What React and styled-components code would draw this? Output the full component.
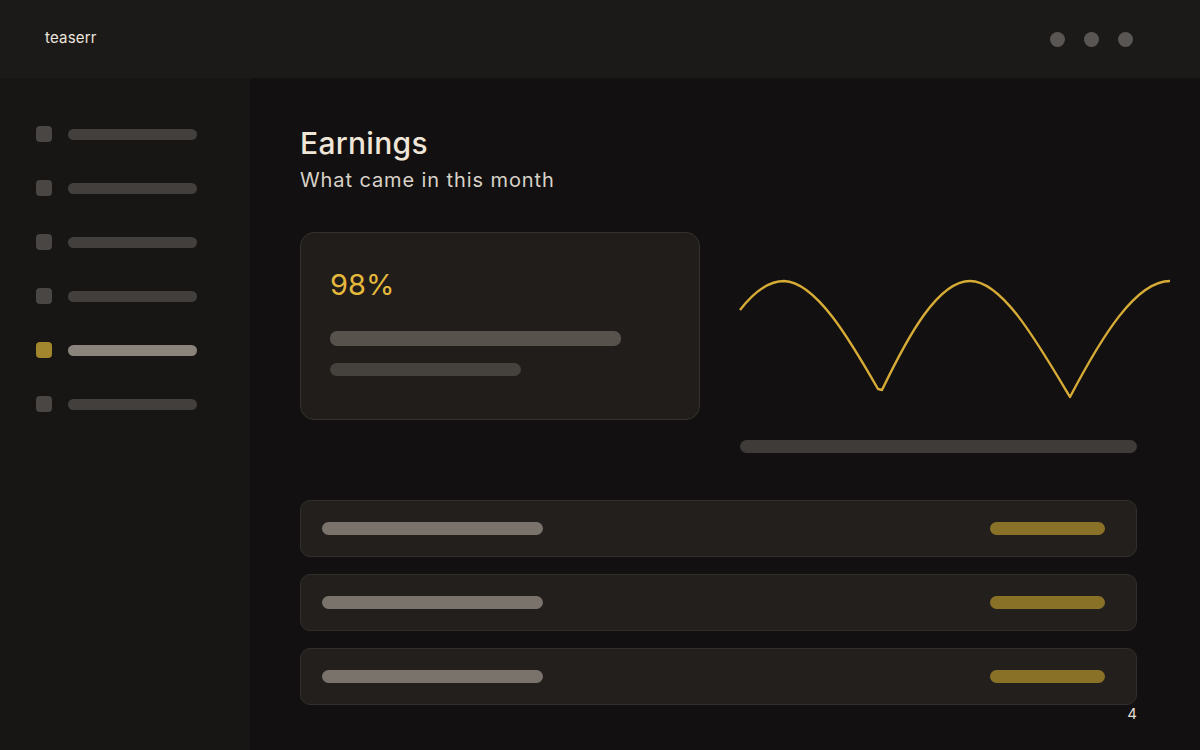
import React from 'react';
import styled, { createGlobalStyle } from 'styled-components';

const GlobalStyle = createGlobalStyle`
  html, body {
    margin: 0;
    padding: 0;
    background: #121010;
  }
  body {
    font-family: Inter, "Noto Sans", sans-serif;
    color: #ebe4d8;
  }
`;

const Page = styled.div`
  width: 1200px;
  height: 750px;
  overflow: hidden;
  display: flex;
  flex-direction: column;
  background: #121010;
`;

const Header = styled.header`
  height: 78px;
  flex-shrink: 0;
  display: flex;
  align-items: center;
  justify-content: space-between;
  padding: 0 67px 0 45px;
  background: #1c1a19;
  box-sizing: border-box;
`;

const Brand = styled.div`
  font-size: 15px;
  line-height: 20px;
  margin-top: -3px;
  color: #ece6dc;
  letter-spacing: 0.2px;
`;

const Dots = styled.div`
  display: flex;
  gap: 19px;
  margin-top: 1px;
`;

const Dot = styled.span`
  width: 15px;
  height: 15px;
  border-radius: 50%;
  background: #5a5654;
`;

const Body = styled.div`
  flex: 1;
  display: grid;
  grid-template-columns: 250px minmax(0, 1fr);
`;

const Sidebar = styled.nav`
  background: #181615;
  padding: 48px 0 0 36px;
  display: flex;
  flex-direction: column;
  gap: 38px;
`;

const NavItem = styled.div`
  display: flex;
  align-items: center;
  gap: 16px;
  height: 16px;
`;

const NavIcon = styled.span`
  width: 16px;
  height: 16px;
  border-radius: 4px;
  background: ${p => (p.$active ? '#a3872f' : '#4a4644')};
`;

const NavBar = styled.span`
  width: 129px;
  height: 11px;
  border-radius: 6px;
  background: ${p => (p.$active ? '#8a847c' : '#433f3c')};
`;

const Main = styled.main`
  padding: 47px 63px 0 50px;
  display: flex;
  flex-direction: column;
  min-width: 0;
`;

const Title = styled.h1`
  margin: 0;
  font-size: 30px;
  line-height: 36px;
  font-weight: 500;
  color: #efe6d8;
  letter-spacing: 0.3px;
`;

const Subtitle = styled.p`
  margin: 5px 0 0;
  font-size: 20px;
  line-height: 28px;
  font-weight: 400;
  color: #d8d2c8;
  letter-spacing: 0.9px;
`;

const TopRow = styled.div`
  margin-top: 38px;
  height: 188px;
  display: flex;
  align-items: flex-start;
  gap: 40px;
`;

const StatCard = styled.section`
  width: 400px;
  height: 188px;
  flex-shrink: 0;
  box-sizing: border-box;
  padding: 34px 29px 0;
  border-radius: 14px;
  background: #201d1b;
  border: 1px solid #35312d;
`;

const StatValue = styled.div`
  font-size: 29px;
  line-height: 36px;
  color: #e5b93c;
`;

const Line = styled.div`
  width: ${p => p.$w}px;
  height: ${p => p.$h || 13}px;
  border-radius: 7px;
  background: ${p => p.$c};
  margin-top: ${p => p.$mt || 0}px;
  flex-shrink: 0;
`;

const ChartCol = styled.div`
  width: 397px;
  display: flex;
  flex-direction: column;
`;

const ChartSvg = styled.svg`
  display: block;
  margin-top: 38px;
  overflow: visible;
`;

const List = styled.div`
  margin-top: 80px;
  display: flex;
  flex-direction: column;
  gap: 17px;
`;

const Row = styled.div`
  height: 57px;
  box-sizing: border-box;
  padding: 0 31px 0 21px;
  display: flex;
  align-items: center;
  justify-content: space-between;
  border-radius: 10px;
  background: #221f1c;
  border: 1px solid #322e2b;
`;

const Footer = styled.div`
  text-align: right;
  font-size: 15px;
  line-height: 18px;
  color: #e4ded4;
`;

const navItems = [false, false, false, false, true, false];

export default function App() {
  return (
    <Page>
      <GlobalStyle />
      <Header>
        <Brand>teaserr</Brand>
        <Dots>
          <Dot />
          <Dot />
          <Dot />
        </Dots>
      </Header>
      <Body>
        <Sidebar>
          {navItems.map((active, i) => (
            <NavItem key={i}>
              <NavIcon $active={active} />
              <NavBar $active={active} />
            </NavItem>
          ))}
        </Sidebar>
        <Main>
          <Title>Earnings</Title>
          <Subtitle>What came in this month</Subtitle>
          <TopRow>
            <StatCard>
              <StatValue>98%</StatValue>
              <Line $w={291} $h={15} $c="#58524c" $mt={28} />
              <Line $w={191} $h={13} $c="#45413c" $mt={17} />
            </StatCard>
            <ChartCol>
              <ChartSvg width="430" height="130" viewBox="0 0 430 130">
                <path
                  d="M0 40 C14 22 28 11 44 11 C76 12 110 70 138 119 L142 120 C168 66 198 11 230 11 C262 11 296 70 330 127 C362 66 396 11 430 11"
                  fill="none"
                  stroke="#d6ab36"
                  strokeWidth="2.4"
                  strokeLinejoin="round"
                />
              </ChartSvg>
              <Line $w={397} $h={13} $c="#3f3b38" $mt={40} />
            </ChartCol>
          </TopRow>
          <List>
            {[0, 1, 2].map(i => (
              <Row key={i}>
                <Line $w={221} $h={13} $c="#7a736c" />
                <Line $w={115} $h={13} $c="#8a7128" />
              </Row>
            ))}
          </List>
          <Footer>4</Footer>
        </Main>
      </Body>
    </Page>
  );
}
